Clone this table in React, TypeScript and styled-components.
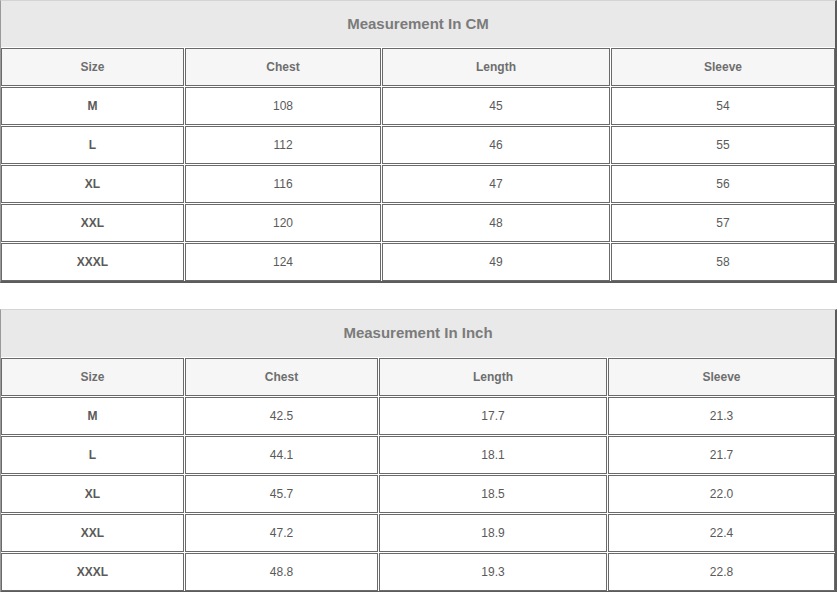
import React from "react";
import styled, { createGlobalStyle } from "styled-components";

type ISizeTable = {
  title: string;
  titleHeight: number;
  columns: string;
  rows: string[][];
};

const HEADERS = ["Size", "Chest", "Length", "Sleeve"];

const cmTable: ISizeTable = {
  title: "Measurement In CM",
  titleHeight: 46,
  columns: "183px 196px 228px 224px",
  rows: [
    ["M", "108", "45", "54"],
    ["L", "112", "46", "55"],
    ["XL", "116", "47", "56"],
    ["XXL", "120", "48", "57"],
    ["XXXL", "124", "49", "58"],
  ],
};

const inchTable: ISizeTable = {
  title: "Measurement In Inch",
  titleHeight: 47,
  columns: "183px 193px 228px 227px",
  rows: [
    ["M", "42.5", "17.7", "21.3"],
    ["L", "44.1", "18.1", "21.7"],
    ["XL", "45.7", "18.5", "22.0"],
    ["XXL", "47.2", "18.9", "22.4"],
    ["XXXL", "48.8", "19.3", "22.8"],
  ],
};

const GlobalStyle = createGlobalStyle`
  body {
    margin: 0;
    background: #fff;
    font-family: "Liberation Sans", Arial, sans-serif;
  }
`;

const SizeTable: React.FC<{ table: ISizeTable }> = ({ table }) => {
  return (
    <TableGrid columns={table.columns} titleHeight={table.titleHeight}>
      <TitleCell>{table.title}</TitleCell>
      {HEADERS.map((h) => (
        <Cell key={h} head>
          {h}
        </Cell>
      ))}
      {table.rows.map((row) =>
        row.map((value, i) => (
          <Cell key={`${row[0]}/${i}`} strong={i === 0}>
            {value}
          </Cell>
        ))
      )}
    </TableGrid>
  );
};

const App: React.FC = () => {
  return (
    <Page>
      <GlobalStyle />
      <SizeTable table={cmTable} />
      <SizeTable table={inchTable} />
    </Page>
  );
};

const Page = styled.div`
  width: 837px;
  display: flex;
  flex-direction: column;
  gap: 26px;
`;

const TableGrid = styled.div<{ columns: string; titleHeight: number }>`
  display: grid;
  grid-template-columns: ${(p) => p.columns};
  grid-template-rows: ${(p) => p.titleHeight}px repeat(6, 38px);
  gap: 1px;
  border-top: 1px solid #d4d4d4;
  border-left: 1px solid #9a9a9a;
  border-right: 2px solid #5c5c5c;
  border-bottom: 2px solid #5c5c5c;
  background: #fff;
`;

const TitleCell = styled.div`
  grid-column: 1 / -1;
  display: flex;
  align-items: center;
  justify-content: center;
  padding-bottom: 2px;
  background: #e9e9e9;
  color: #7b7b7b;
  font-size: 15px;
  font-weight: bold;
`;

const Cell = styled.div<{ head?: boolean; strong?: boolean }>`
  display: flex;
  align-items: center;
  justify-content: center;
  border: 1px solid #6a6a6a;
  background: ${(p) => (p.head ? "#f6f6f6" : "#fff")};
  color: ${(p) => (p.head ? "#6e6e6e" : "#5a5a5a")};
  font-size: 12px;
  font-weight: ${(p) => (p.head || p.strong ? "bold" : "normal")};
`;

export default App;
